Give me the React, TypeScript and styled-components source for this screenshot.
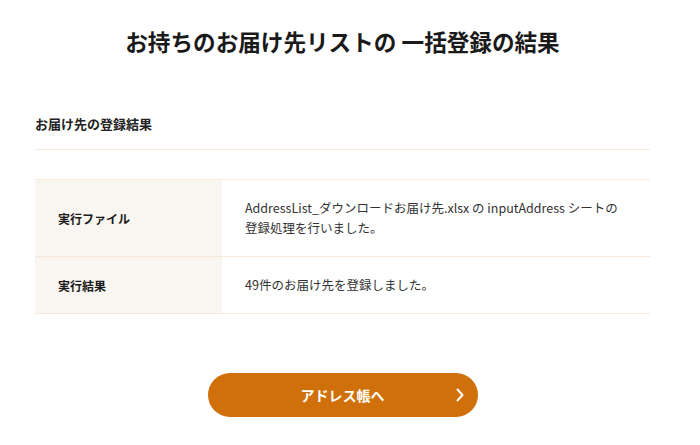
import React from "react";
import styled, { createGlobalStyle } from "styled-components";

const Global = createGlobalStyle`
  html, body { margin: 0; padding: 0; background: #fff; }
  body { font-family: "Noto Sans CJK JP", "Noto Sans", sans-serif; color: #222; }
`;

const Page = styled.div`
  width: 685px;
  padding-top: 26px;
  box-sizing: border-box;
`;

const Title = styled.h1`
  margin: 0;
  text-align: center;
  font-size: 22.6px;
  line-height: 32px;
  font-weight: 700;
  color: #1a1a1a;
`;

const Section = styled.section`
  margin: 0 35px;
  padding-top: 56px;
`;

const SectionHead = styled.h2`
  margin: 0;
  font-size: 13px;
  line-height: 20px;
  font-weight: 700;
  padding-bottom: 15px;
  border-bottom: 1px solid #f6e9dc;
`;

const Table = styled.div`
  margin-top: 29px;
  border-top: 1px solid #f6e9dc;
`;

const Row = styled.div`
  display: grid;
  grid-template-columns: 187px 1fr;
  border-bottom: 1px solid #f6e9dc;
`;

const Label = styled.div`
  background: #f9f5f1;
  display: flex;
  align-items: center;
  padding: 0 23px;
  font-size: 12px;
  font-weight: 700;
  color: #1a1a1a;
`;

const Value = styled.div`
  padding: 18px 23px;
  font-size: 12.5px;
  line-height: 20px;
  color: #333;
`;

const ButtonWrap = styled.div`
  display: flex;
  justify-content: center;
  margin-top: 59px;
`;

const PrimaryButton = styled.button`
  position: relative;
  width: 270px;
  height: 44px;
  border: none;
  border-radius: 22px;
  background: #d0700a;
  color: #fff;
  font-family: inherit;
  font-size: 14px;
  font-weight: 700;
  cursor: pointer;
  display: flex;
  align-items: center;
  justify-content: center;
`;

const Chevron = styled.svg`
  position: absolute;
  right: 13px;
  top: 50%;
  transform: translateY(-50%);
`;

export default function App() {
  return (
    <>
      <Global />
      <Page>
        <Title>お持ちのお届け先リストの 一括登録の結果</Title>
        <Section>
          <SectionHead>お届け先の登録結果</SectionHead>
          <Table>
            <Row>
              <Label>実行ファイル</Label>
              <Value>
                AddressList_ダウンロードお届け先.xlsx の inputAddress シートの
                <br />
                登録処理を行いました。
              </Value>
            </Row>
            <Row>
              <Label>実行結果</Label>
              <Value>49件のお届け先を登録しました。</Value>
            </Row>
          </Table>
        </Section>
        <ButtonWrap>
          <PrimaryButton>
            アドレス帳へ
            <Chevron width="10" height="14" viewBox="0 0 10 14">
              <path d="M2.5 1.5 L7.5 7 L2.5 12.5" fill="none" stroke="#fff" strokeWidth="2" strokeLinecap="round" strokeLinejoin="round" />
            </Chevron>
          </PrimaryButton>
        </ButtonWrap>
      </Page>
    </>
  );
}
